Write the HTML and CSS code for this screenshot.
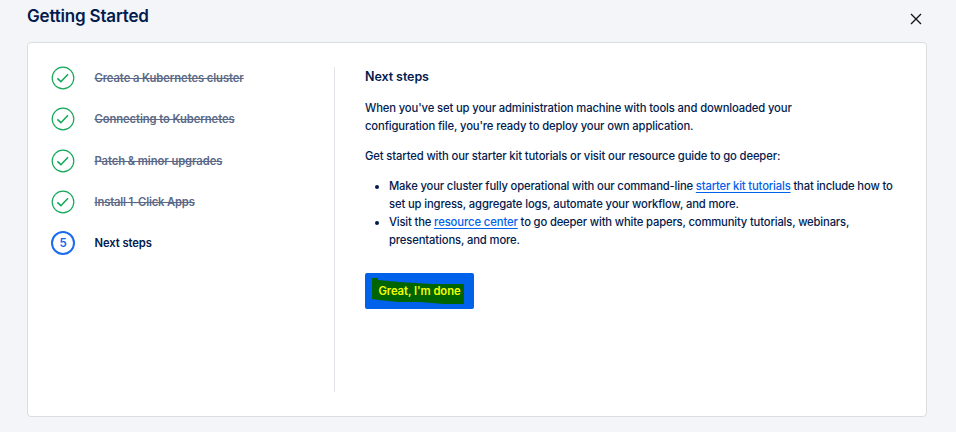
FILE: index.html
```html
<!DOCTYPE html>
<html lang="en">
<head>
<meta charset="utf-8">
<title>Getting Started</title>
<link rel="stylesheet" href="styles.css">
</head>
<body>
<header class="header">
  <h1 class="title">Getting Started</h1>
  <button class="close" aria-label="Close"><svg width="12" height="12" viewBox="0 0 12 12"><path d="M1 1L11 11M11 1L1 11"/></svg></button>
</header>
<main class="card">
  <ol class="steps">
    <li class="step done"><svg class="check" viewBox="0 0 24 24"><circle cx="12" cy="12" r="10.8"/><path d="M6.4 12.4L9.9 15.7L17 8.3"/></svg><span class="label">Create a Kubernetes cluster</span></li>
    <li class="step done"><svg class="check" viewBox="0 0 24 24"><circle cx="12" cy="12" r="10.8"/><path d="M6.4 12.4L9.9 15.7L17 8.3"/></svg><span class="label">Connecting to Kubernetes</span></li>
    <li class="step done"><svg class="check" viewBox="0 0 24 24"><circle cx="12" cy="12" r="10.8"/><path d="M6.4 12.4L9.9 15.7L17 8.3"/></svg><span class="label">Patch &amp; minor upgrades</span></li>
    <li class="step done"><svg class="check" viewBox="0 0 24 24"><circle cx="12" cy="12" r="10.8"/><path d="M6.4 12.4L9.9 15.7L17 8.3"/></svg><span class="label tight">Install 1-Click Apps</span></li>
    <li class="step"><span class="number">5</span><span class="label">Next steps</span></li>
  </ol>
  <section class="content">
    <h2 class="heading">Next steps</h2>
    <p><span class="line">When you've set up your administration machine with tools and downloaded your</span><br><span class="line">configuration file, you're ready to deploy your own application.</span></p>
    <p><span class="line">Get started with our starter kit tutorials or visit our resource guide to go deeper:</span></p>
    <ul class="resources">
      <li><span class="line snug">Make your cluster fully operational with our command-line <a href="#">starter kit tutorials</a> that include how to</span><br><span class="line">set up ingress, aggregate logs, automate your workflow, and more.</span></li>
      <li><span class="line snug">Visit the <a class="wide" href="#">resource center</a> to go deeper with white papers, community tutorials, webinars,</span><br><span class="line">presentations, and more.</span></li>
    </ul>
    <button class="finish"><svg class="marker" width="109" height="36" viewBox="0 0 109 36"><path d="M7 5H13V7L34 9L67 11L99 11V31L79 31L55 29L33 29L14 27L7 26Z"/></svg><span class="finish-label">Great, I'm done</span></button>
  </section>
</main>
</body>
</html>
```
FILE: styles.css
```css
* { box-sizing: border-box; }
body { margin: 0; height: 432px; overflow: hidden; padding: 0 29px 0 27px; background: #f3f5f9; color: #031b4e; font: 450 11.25px/18px Inter, sans-serif; }
button { border: 0; padding: 0; background: none; font: inherit; }
.header { height: 42px; display: flex; justify-content: space-between; }
.title { margin: 6px 0 0; font-size: 17px; line-height: 20px; font-weight: 600; letter-spacing: -.18px; }
.close { width: 12px; height: 12px; margin: 13px 5px 0 0; line-height: 0; }
.close path { stroke: #111; stroke-width: 1.3; fill: none; }
.card { height: 375px; display: flex; padding: 24px 23px; background: #fff; border: 1px solid #dcdddf; border-radius: 4px; }
.steps { width: 284px; height: 325px; flex: none; margin: 0; padding: 0; list-style: none; border-right: 1px solid #e3e5ea; }
.step { display: flex; align-items: center; height: 22px; margin-bottom: 19.3px; }
.check { width: 24px; height: 24px; margin-right: 19.5px; fill: none; stroke: #15a85a; stroke-width: 1.2; }
.check path { stroke-width: 1.6; }
.number { width: 24px; height: 24px; margin-right: 19.5px; border: 2px solid #1d6ced; border-radius: 50%; color: #1665ed; font-size: 11.5px; font-weight: 600; line-height: 20px; text-align: center; }
.label { font-weight: 600; letter-spacing: -.09px; white-space: nowrap; }
.tight { letter-spacing: -.18px; }
.done .label { color: #5b6987; text-decoration: line-through; }
.content { padding-left: 30px; }
.heading { margin: 1px 0 13px; font-size: 12.5px; line-height: 18px; font-weight: 600; letter-spacing: -.08px; }
.content p { margin: 0 0 12px; }
.line { white-space: nowrap; letter-spacing: -.135px; }
.snug { letter-spacing: -.165px; }
.resources { margin: 0 0 24px; padding-left: 24px; }
a { color: #0061eb; text-decoration: underline; text-underline-offset: 2px; }
.wide { letter-spacing: -.1px; }
.finish { display: grid; width: 109px; height: 36px; border-radius: 2px; background: #0061eb; place-items: center; }
.marker, .finish-label { grid-area: 1 / 1; }
.marker { fill: #006400; }
.finish-label { color: #f5ff00; font-weight: 600; letter-spacing: -.07px; white-space: nowrap; }
```
